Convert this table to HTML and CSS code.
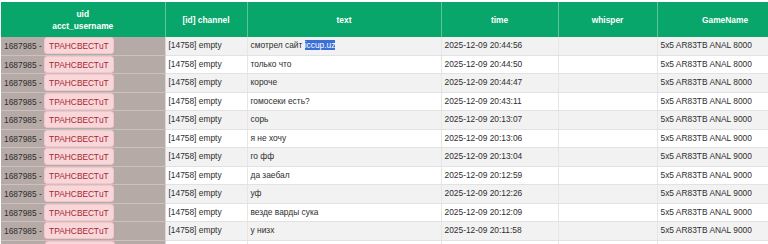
FILE: index.html
```html
<!DOCTYPE html>
<html>
<head>
<meta charset="utf-8">
<link rel="stylesheet" href="styles.css">
</head>
<body>
<table class="log">
  <colgroup>
    <col class="c-uid"><col class="c-chan"><col class="c-text"><col class="c-time"><col class="c-wh"><col class="c-game">
  </colgroup>
  <thead>
    <tr><th>uid<br>acct_username</th><th>[id] channel</th><th>text</th><th>time</th><th>whisper</th><th>GameName</th></tr>
  </thead>
  <tbody>
    <tr><td class="uid">1687985 - <span class="badge">ТРАНСВЕСТuT</span></td><td>[14758] empty</td><td>смотрел сайт <span class="sel">iccup.uz</span></td><td>2025-12-09 20:44:56</td><td></td><td>5x5 AR83TB ANAL 8000</td></tr>
    <tr><td class="uid">1687985 - <span class="badge">ТРАНСВЕСТuT</span></td><td>[14758] empty</td><td>только что</td><td>2025-12-09 20:44:50</td><td></td><td>5x5 AR83TB ANAL 8000</td></tr>
    <tr><td class="uid">1687985 - <span class="badge">ТРАНСВЕСТuT</span></td><td>[14758] empty</td><td>короче</td><td>2025-12-09 20:44:47</td><td></td><td>5x5 AR83TB ANAL 8000</td></tr>
    <tr><td class="uid">1687985 - <span class="badge">ТРАНСВЕСТuT</span></td><td>[14758] empty</td><td>гомосеки есть?</td><td>2025-12-09 20:43:11</td><td></td><td>5x5 AR83TB ANAL 8000</td></tr>
    <tr><td class="uid">1687985 - <span class="badge">ТРАНСВЕСТuT</span></td><td>[14758] empty</td><td>сорь</td><td>2025-12-09 20:13:07</td><td></td><td>5x5 AR83TB ANAL 9000</td></tr>
    <tr><td class="uid">1687985 - <span class="badge">ТРАНСВЕСТuT</span></td><td>[14758] empty</td><td>я не хочу</td><td>2025-12-09 20:13:06</td><td></td><td>5x5 AR83TB ANAL 9000</td></tr>
    <tr><td class="uid">1687985 - <span class="badge">ТРАНСВЕСТuT</span></td><td>[14758] empty</td><td>го фф</td><td>2025-12-09 20:13:04</td><td></td><td>5x5 AR83TB ANAL 9000</td></tr>
    <tr><td class="uid">1687985 - <span class="badge">ТРАНСВЕСТuT</span></td><td>[14758] empty</td><td>да заебал</td><td>2025-12-09 20:12:59</td><td></td><td>5x5 AR83TB ANAL 9000</td></tr>
    <tr><td class="uid">1687985 - <span class="badge">ТРАНСВЕСТuT</span></td><td>[14758] empty</td><td>уф</td><td>2025-12-09 20:12:26</td><td></td><td>5x5 AR83TB ANAL 9000</td></tr>
    <tr><td class="uid">1687985 - <span class="badge">ТРАНСВЕСТuT</span></td><td>[14758] empty</td><td>везде варды сука</td><td>2025-12-09 20:12:09</td><td></td><td>5x5 AR83TB ANAL 9000</td></tr>
    <tr><td class="uid">1687985 - <span class="badge">ТРАНСВЕСТuT</span></td><td>[14758] empty</td><td>у низх</td><td>2025-12-09 20:11:58</td><td></td><td>5x5 AR83TB ANAL 9000</td></tr>
    <tr><td class="uid"><span class="badge blank">&nbsp;</span></td><td></td><td></td><td></td><td></td><td></td></tr>
  </tbody>
</table>
</body>
</html>
```

FILE: styles.css
```css
html, body {
  margin: 0;
  background: #fff;
}
body {
  padding: 2px 0 0 1px;
  overflow: hidden;
  font-family: "Liberation Sans", Arial, sans-serif;
  font-size: 8.4px;
  color: #2e2e2e;
}
.log {
  border-collapse: collapse;
  table-layout: fixed;
  width: 792px;
}
.c-uid { width: 164px; }
.c-chan { width: 82px; }
.c-text { width: 194px; }
.c-time { width: 117px; }
.c-wh { width: 99px; }
.c-game { width: 136px; }

.log th {
  background: #08a66b;
  color: #fff;
  font-weight: bold;
  height: 35px;
  padding: 0;
  line-height: 12px;
  text-align: center;
  vertical-align: middle;
  border-right: 1px solid #5cc498;
}
.log td {
  height: 17.5px;
  padding: 0 3px;
  line-height: 11px;
  white-space: nowrap;
  overflow: hidden;
  text-align: left;
  vertical-align: middle;
  border-bottom: 1px solid #e2e2e2;
  border-right: 1px solid #e6e6e6;
}
.log tbody tr:nth-child(odd) td { background: #f2f2f2; }
.log tbody tr:nth-child(even) td { background: #fff; }
.log tbody tr td.uid {
  background: #b5aaa6;
  padding-left: 3px;
  border-bottom-color: #cbc2bf;
  border-right-color: #d8d8d8;
}
.badge {
  display: inline-block;
  background: #f8d7da;
  color: #a8262f;
  border: 1px solid #f4c4c8;
  border-radius: 3px;
  padding: 3px 4px 2px;
  line-height: 10px;
}
.badge.blank {
  margin-left: 41px;
  width: 60px;
}
.sel {
  background: #3b6fd8;
  color: #fff;
}
```
